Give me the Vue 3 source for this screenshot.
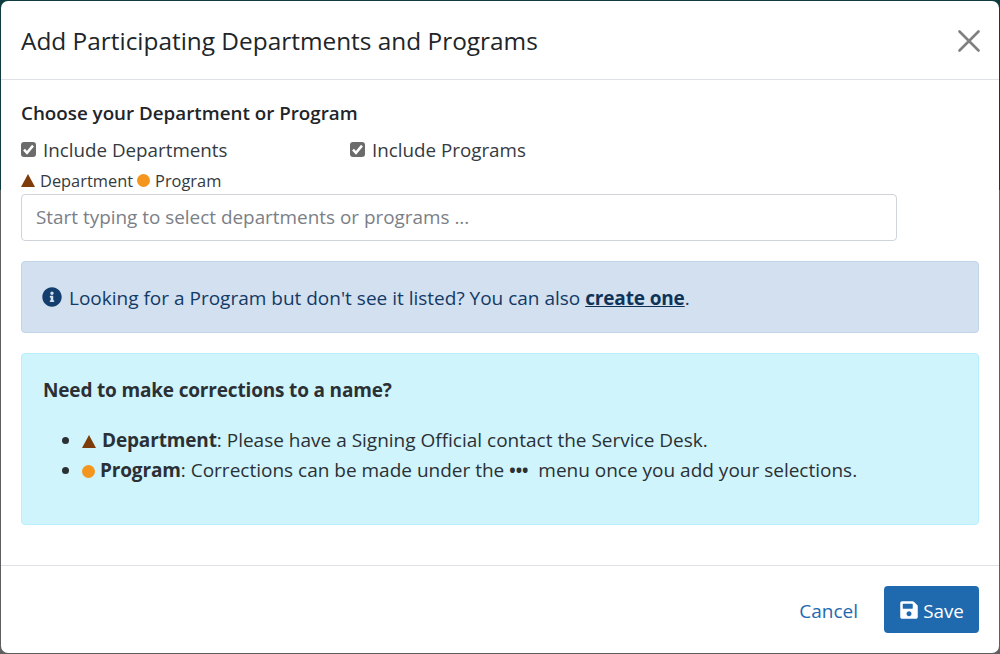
<script setup>
const legendColor = { tri: '#7d3c0a', dot: '#f4961e' }
</script>

<template>
  <div class="backdrop">
    <div class="modal">
      <header class="head">
        <h2 class="title">Add Participating Departments and Programs</h2>
        <button class="close" aria-label="Close">
          <svg width="22" height="22" viewBox="0 0 22 22"><path d="M1.5 1.5 L20.5 20.5 M20.5 1.5 L1.5 20.5" stroke="#808080" stroke-width="2.6" stroke-linecap="round" fill="none"/></svg>
        </button>
      </header>
      <main class="body">
        <div class="label">Choose your Department or Program</div>
        <div class="checks">
          <label class="check"><span class="box"><svg width="15" height="15" viewBox="0 0 15 15"><path d="M3 7.6 L6 10.8 L12 3.6" stroke="#fff" stroke-width="2.5" fill="none"/></svg></span>Include Departments</label>
          <label class="check"><span class="box"><svg width="15" height="15" viewBox="0 0 15 15"><path d="M3 7.6 L6 10.8 L12 3.6" stroke="#fff" stroke-width="2.5" fill="none"/></svg></span>Include Programs</label>
        </div>
        <div class="legend">
          <svg width="14" height="13" viewBox="0 0 14 13"><path d="M7 0 L14 13 L0 13 Z" :fill="legendColor.tri"/></svg>
          <span>Department</span>
          <svg class="dot" width="13" height="13" viewBox="0 0 13 13"><circle cx="6.5" cy="6.5" r="6.5" :fill="legendColor.dot"/></svg>
          <span>Program</span>
        </div>
        <input class="input" placeholder="Start typing to select departments or programs ..." />
        <div class="alert blue">
          <svg class="info" width="20" height="20" viewBox="0 0 512 512"><path fill="#133e6e" d="M256 8C119 8 8 119 8 256s111 248 248 248 248-111 248-248S393 8 256 8zm0 110c23 0 42 19 42 42s-19 42-42 42-42-19-42-42 19-42 42-42zm56 254c0 7-5 12-12 12h-88c-7 0-12-5-12-12v-24c0-7 5-12 12-12h12v-64h-12c-7 0-12-5-12-12v-24c0-7 5-12 12-12h64c7 0 12 5 12 12v100h12c7 0 12 5 12 12v24z"/></svg>
          <span class="blue-text">Looking for a Program but don't see it listed? You can also <a class="link">create one</a>.</span>
        </div>
        <div class="alert cyan">
          <div class="need">Need to make corrections to a name?</div>
          <ul class="list">
            <li><svg class="mark tri" width="14" height="13" viewBox="0 0 14 13"><path d="M7 0 L14 13 L0 13 Z" :fill="legendColor.tri"/></svg><b>Department</b>: Please have a Signing Official contact the Service Desk.</li>
            <li><svg class="mark" width="13" height="13" viewBox="0 0 13 13"><circle cx="6.5" cy="6.5" r="6.5" :fill="legendColor.dot"/></svg><b>Program</b>: Corrections can be made under the <b class="dots">•••</b>&nbsp; menu once you add your selections.</li>
          </ul>
        </div>
      </main>
      <footer class="foot">
        <a class="cancel">Cancel</a>
        <button class="save">
          <svg width="20" height="20" viewBox="0 0 448 512"><path fill="#fff" d="M433.9 129.9l-83.9-83.9A48 48 0 0 0 316.1 32H48C21.5 32 0 53.5 0 80v352c0 26.5 21.5 48 48 48h352c26.5 0 48-21.5 48-48V163.9a48 48 0 0 0-14.1-34zM224 416c-35.3 0-64-28.7-64-64s28.7-64 64-64 64 28.7 64 64-28.7 64-64 64zm96-304.5V212c0 6.6-5.4 12-12 12H76c-6.6 0-12-5.4-12-12V108c0-6.6 5.4-12 12-12h228.5c3.2 0 6.2 1.3 8.5 3.5l3.5 3.5c2.3 2.3 3.5 5.3 3.5 8.5z"/></svg>
          <span class="save-text">Save</span>
        </button>
      </footer>
    </div>
  </div>
</template>

<style>
html, body { margin: 0; background: #5a5a5a; }
</style>

<style scoped>
.backdrop {
  width: 1000px;
  height: 654px;
  box-sizing: border-box;
  padding: 1px;
  background: linear-gradient(#0f3c40 0, #0f3c40 190px, #5f5f5f 190px);
  font-family: "Open Sans", "Noto Sans", sans-serif;
  color: #212529;
  overflow: hidden;
}
.modal {
  height: 652px;
  background: #fff;
  border-radius: 7px;
  display: flex;
  flex-direction: column;
}
.head {
  height: 78px;
  border-bottom: 1px solid #dee2e6;
  display: flex;
  align-items: center;
  justify-content: space-between;
  padding: 0 19px 0 20px;
  flex: none;
}
.title { margin: 2px 0 0; font-size: 24.4px; font-weight: 400; line-height: 36px; }
.close { border: 0; background: none; padding: 0; width: 22px; height: 22px; margin-top: 2px; display: block; }
.close svg { display: block; }
.body { flex: 1; padding: 21px 20px 0; }
.label { font-size: 18.8px; font-weight: 600; line-height: 24px; }
.checks { display: flex; margin-top: 12px; height: 25px; align-items: center; }
.check { display: flex; align-items: center; font-size: 18.8px; color: #343a40; width: 329px; }
.box { width: 15px; height: 15px; background: #6b6b6b; border-radius: 3px; margin-right: 7px; display: flex; align-items: center; justify-content: center; }
.legend { display: flex; align-items: center; margin-top: 6px; height: 24px; font-size: 16.4px; color: #343a40; }
.legend svg { margin-right: 5px; }
.legend span { margin-right: 4px; }
.input {
  display: block;
  width: 876px;
  height: 47px;
  box-sizing: border-box;
  border: 1px solid #ced4da;
  border-radius: 4px;
  padding: 0 14px 2px;
  margin-top: 2px;
  font: 18.9px "Open Sans", "Noto Sans", sans-serif;
  outline: 0;
}
.input::placeholder { color: #7b8087; opacity: 1; }
.alert { border-radius: 4px; box-sizing: border-box; width: 958px; }
.blue {
  margin-top: 20px;
  height: 72px;
  background: #d2e0ef;
  border: 1px solid #c1d4e8;
  display: flex;
  align-items: center;
  padding: 0 20px;
  font-size: 19px;
  color: #123a66;
}
.blue-text { padding-top: 2px; }
.info { margin-right: 7px; flex: none; }
.link { color: #0f3358; font-weight: 700; letter-spacing: -0.15px; text-decoration: underline; }
.cyan {
  margin-top: 20px;
  height: 172px;
  background: #cff4fc;
  border: 1px solid #b6effb;
  padding: 21px 21px;
  color: #2b3035;
  font-size: 19px;
}
.need { font-weight: 700; line-height: 30px; letter-spacing: -0.17px; }
.list { margin: 20px 0 0; padding: 0 0 0 39px; }
.list li { line-height: 30px; }
.list b { letter-spacing: -0.15px; }
.mark { margin-right: 5px; vertical-align: -1px; }
.mark.tri { margin-right: 6px; }
.list .dots { font-size: 17px; letter-spacing: 0; }
.foot {
  flex: none;
  height: 88px;
  border-top: 1px solid #dee2e6;
  display: flex;
  align-items: center;
  justify-content: flex-end;
  padding: 0 20px;
  box-sizing: border-box;
}
.cancel { color: #1f69ae; font-size: 19px; margin-right: 26px; padding-top: 2px; }
.save {
  width: 95px;
  height: 47px;
  background: #1f69ae;
  border: 0;
  border-radius: 4px;
  color: #fff;
  font: 18.8px "Open Sans", "Noto Sans", sans-serif;
  display: flex;
  align-items: center;
  justify-content: center;
  gap: 4px;
  padding: 0;
}
.save-text { padding-top: 2px; }
</style>
